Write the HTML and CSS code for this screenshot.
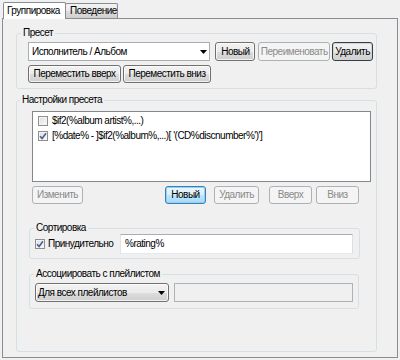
FILE: index.html
```html
<!DOCTYPE html>
<html lang="ru">
<head>
    <meta charset="UTF-8" />
    <title>Группировка</title>
    <link rel="stylesheet" href="styles.css">
</head>
<body>
    <div class="dialog">
        <div class="tabs">
            <div class="tab active">Группировка</div>
            <div class="tab">Поведение</div>
        </div>
        <div class="page">
            <fieldset class="group preset">
                <legend>Пресет</legend>
                <div class="row">
                    <div class="combo edit w-preset">
                        <span class="combo-text">Исполнитель / Альбом</span>
                        <svg class="arrow" width="7" height="4" viewBox="0 0 7 4"><path d="M0 0h7L3.5 4z" fill="#000"/></svg>
                    </div>
                    <button class="btn w-new">Новый</button>
                    <button class="btn off w-rename">Переименовать</button>
                    <button class="btn def w-del">Удалить</button>
                </div>
                <div class="row second">
                    <button class="btn w-up">Переместить вверх</button>
                    <button class="btn w-down">Переместить вниз</button>
                </div>
            </fieldset>

            <fieldset class="group settings">
                <legend>Настройки пресета</legend>
                <div class="list">
                    <div class="item">
                        <span class="check"></span>
                        <span>$if2(%album artist%,...)</span>
                    </div>
                    <div class="item">
                        <span class="check">
                            <svg width="8" height="8" viewBox="0 0 8 8"><path d="M1 4.2 3.1 6.5 7 1.2" fill="none" stroke="#4a5f97" stroke-width="1.6"/></svg>
                        </span>
                        <span>[%date% - ]$if2(%album%,...)[ '(CD%discnumber%')']</span>
                    </div>
                </div>
                <div class="row list-btns">
                    <button class="btn off w-edit">Изменить</button>
                    <button class="btn focus w-new2">Новый</button>
                    <button class="btn off w-del2">Удалить</button>
                    <button class="btn off w-upper">Вверх</button>
                    <button class="btn off w-lower">Вниз</button>
                </div>

                <fieldset class="group sub sort">
                    <legend>Сортировка</legend>
                    <div class="row">
                        <label class="checkline">
                            <span class="check">
                                <svg width="8" height="8" viewBox="0 0 8 8"><path d="M1 4.2 3.1 6.5 7 1.2" fill="none" stroke="#4a5f97" stroke-width="1.6"/></svg>
                            </span>
                            Принудительно
                        </label>
                        <div class="field w-rating">%rating%</div>
                    </div>
                </fieldset>

                <fieldset class="group sub assoc">
                    <legend>Ассоциировать с плейлистом</legend>
                    <div class="row">
                        <div class="combo drop w-assoc">
                            <span class="combo-text">Для всех плейлистов</span>
                            <svg class="arrow" width="7" height="4" viewBox="0 0 7 4"><path d="M0 0h7L3.5 4z" fill="#000"/></svg>
                        </div>
                        <div class="field disabled w-playlist"></div>
                    </div>
                </fieldset>
            </fieldset>
        </div>
    </div>
</body>
</html>
```

FILE: styles.css
```css
html, body {
    margin: 0;
    padding: 0;
}

body {
    width: 400px;
    height: 360px;
    overflow: hidden;
    background: #f0f0f0;
    color: #000;
    font-family: "Liberation Sans", Arial, sans-serif;
    font-size: 10px;
    line-height: 12px;
    letter-spacing: -0.5px;
}

.dialog {
    padding-top: 2px;
}

/* tabs */
.tabs {
    display: flex;
    align-items: flex-end;
    height: 16px;
    padding-left: 3px;
}

.tab {
    box-sizing: border-box;
    height: 15px;
    line-height: 13px;
    padding-left: 4px;
    width: 53px;
    border: 1px solid #898c95;
    border-bottom: 0;
    border-radius: 2px 2px 0 0;
    background: linear-gradient(#f2f2f2, #ebebeb 50%, #dddddd 51%, #cfcfcf);
}

.tab.active {
    position: relative;
    z-index: 1;
    width: 63px;
    height: 17px;
    line-height: 15px;
    padding-left: 3px;
    margin-bottom: -1px;
    margin-right: -1px;
    background: #fff;
}

.page {
    box-sizing: border-box;
    display: flex;
    flex-direction: column;
    width: 396px;
    height: 340px;
    margin-left: 2px;
    padding: 0 0 5px 13px;
    border: 1px solid #898c95;
    background: #f0f0f0;
}

/* group boxes */
.group {
    box-sizing: border-box;
    min-width: 0;
    margin: 0;
    border: 1px solid #d5dfe5;
    border-radius: 3px;
}

.group legend {
    padding: 0 2px;
    line-height: 12px;
}

.preset {
    flex: none;
    width: 361px;
    margin-top: 8px;
    padding: 3px 3px 5px 11px;
}

.preset legend {
    margin-left: -7px;
}

.settings {
    flex: 1;
    width: 361px;
    margin-top: 5px;
    padding: 5px 5px 0 12px;
}

.settings > legend {
    margin-left: -9px;
}

.sub legend {
    margin-left: -1px;
}

.sort {
    width: 331px;
    margin-top: 18px;
    padding: 0 5px 4px 5px;
}

.assoc {
    width: 330px;
    margin-top: 9px;
    padding: 3px 5px 6px 5px;
}

.row {
    display: flex;
    align-items: center;
}

.row.second {
    margin-top: 4px;
}

/* buttons */
.btn {
    box-sizing: border-box;
    height: 19px;
    padding: 0;
    font: inherit;
    letter-spacing: inherit;
    color: #000;
    border: 1px solid #707070;
    border-radius: 3px;
    background: linear-gradient(#f2f2f2, #ebebeb 50%, #dddddd 51%, #cfcfcf);
    box-shadow: inset 0 0 0 1px rgba(255, 255, 255, 0.75);
}

.btn.off {
    color: #8a8a8a;
    border-color: #adb2b5;
    background: #f4f4f4;
    box-shadow: none;
}

.btn.def {
    border-color: #3c3c3c;
    box-shadow: inset 0 0 0 1px #c9d6de;
}

.btn.focus {
    border-color: #3c7fb1;
    background: linear-gradient(#eaf6fd, #d9f0fc 50%, #bee6fd 51%, #a7d9f5);
    box-shadow: inset 0 0 0 1px #8fd1f7;
}

.second .btn,
.list-btns .btn {
    height: 18px;
}

.w-preset { width: 183px; }
.w-new { width: 40px; margin-left: 5px; }
.w-rename { width: 72px; margin-left: 3px; }
.w-del { width: 41px; margin-left: 2px; }
.w-up { width: 93px; }
.w-down { width: 88px; margin-left: 2px; }

.w-edit { width: 51px; margin-left: 3px; }
.w-new2 { width: 41px; margin-left: 82px; }
.w-del2 { width: 45px; margin-left: 8px; }
.w-upper { width: 43px; margin-left: 10px; }
.w-lower { width: 43px; margin-left: 4px; }

/* combo boxes */
.combo {
    box-sizing: border-box;
    display: flex;
    align-items: center;
    height: 19px;
    padding-left: 3px;
    padding-right: 2px;
}

.combo-text {
    flex: 1;
    white-space: nowrap;
}

.combo.edit {
    border: 1px solid #abadb3;
    background: #fff;
}

.combo.drop {
    padding-left: 2px;
    padding-right: 3px;
    border: 1px solid #707070;
    border-radius: 3px;
    background: linear-gradient(#f2f2f2, #ebebeb 50%, #dddddd 51%, #cfcfcf);
    box-shadow: inset 0 0 0 1px rgba(255, 255, 255, 0.75);
}

.w-assoc { width: 134px; }

/* text fields */
.field {
    box-sizing: border-box;
    height: 20px;
    line-height: 18px;
    padding-left: 4px;
    border: 1px solid;
    border-color: #abadb3 #dbdfe6 #e3e9ef #e2e3ea;
    background: #fff;
}

.field.disabled {
    height: 19px;
    border-color: #adb2b5;
    background: #f0f0f0;
}

.w-rating { width: 233px; margin-left: auto; margin-right: 1px; }
.w-playlist { width: 180px; margin-left: 5px; }

/* list */
.list {
    box-sizing: border-box;
    width: 339px;
    height: 71px;
    margin-left: 3px;
    padding-top: 1px;
    border: 1px solid #828790;
    background: #fff;
}

.item {
    display: flex;
    align-items: center;
    height: 15px;
    padding-left: 5px;
    white-space: nowrap;
}

.list-btns {
    margin-top: 4px;
}

.check {
    box-sizing: border-box;
    display: inline-flex;
    align-items: center;
    justify-content: center;
    width: 10px;
    height: 10px;
    margin-right: 4px;
    border: 1px solid #8f8f8f;
    background: linear-gradient(135deg, #dcdcdc, #fbfbfb);
    box-shadow: inset 0 0 0 1px #f4f4f4;
}

.checkline {
    display: flex;
    align-items: center;
    white-space: nowrap;
}

.checkline .check {
    margin-right: 3px;
}
```
